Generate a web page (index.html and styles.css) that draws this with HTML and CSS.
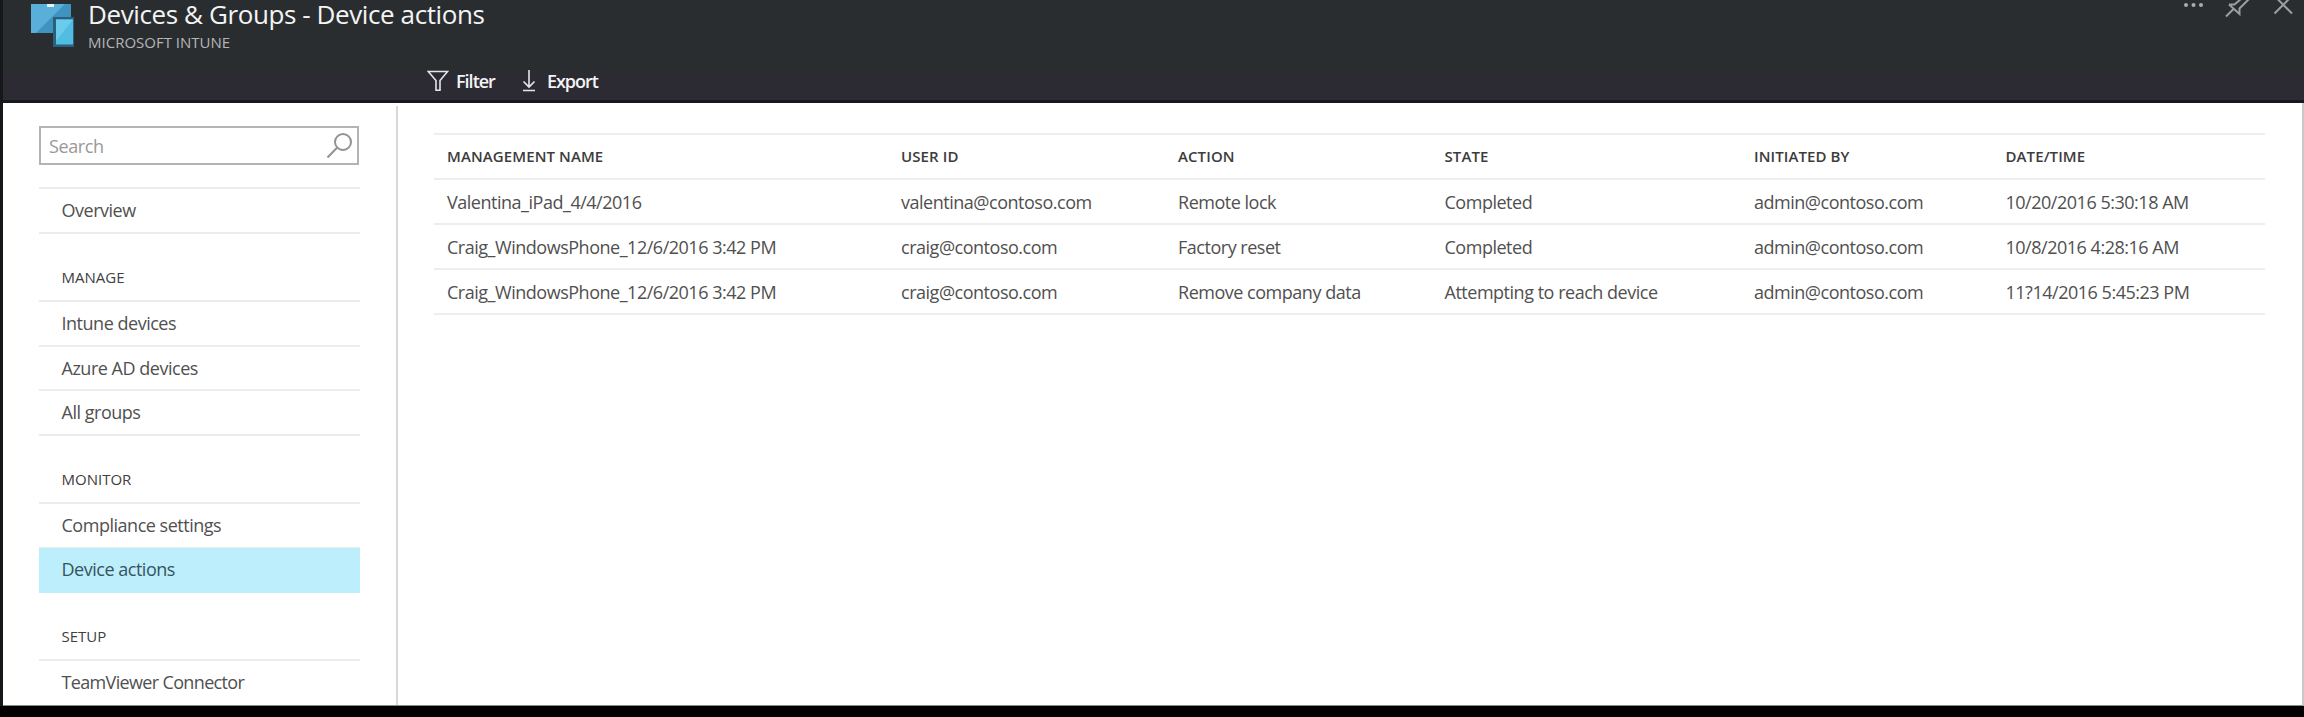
FILE: index.html
```html
<!DOCTYPE html>
<html lang="en">
<head>
<meta charset="utf-8">
<title>Devices &amp; Groups - Device actions</title>
<link rel="stylesheet" href="styles.css">
</head>
<body>
<div class="blade">
  <header class="header">
    <div class="brand">
      <svg class="brand-icon" width="46" height="48" viewBox="0 0 46 48">
        <path d="M1 4h40v29H1z" fill="#3f93c0"/>
        <path d="M1 4h34L6 33H1z" fill="#58b0da"/>
        <path d="M17 4h7v3h-7z" fill="#e4f1f6"/>
        <path d="M23 17h21v30H23z" fill="#2b5f7d"/>
        <path d="M26 19.500h17v25H26z" fill="#52bde3"/>
        <path d="M26 19.500h17L26 41z" fill="#6acbea"/>
      </svg>
      <div class="titles">
        <h1 class="title">Devices &amp; Groups - Device actions</h1>
        <div class="subtitle">MICROSOFT INTUNE</div>
      </div>
      <div class="window-tools">
        <svg width="112" height="20" viewBox="0 0 112 20" fill="none" stroke="#9c9ea0" stroke-width="2">
          <g fill="#a9abad" stroke="none"><circle cx="3" cy="5" r="2"/><circle cx="10.500" cy="5" r="2"/><circle cx="18" cy="5" r="2"/></g>
          <path d="M43 16.500l8-8M46 4.500h5.500L58 -1M46 4.500l10.500 9.500v-5.500L66 -1"/>
          <path d="M91.500 13.500L109-4M91.500-4L109 13.500"/>
        </svg>
      </div>
    </div>
    <div class="commands">
      <button class="command">
        <svg width="22" height="22" viewBox="0 0 22 22" fill="none" stroke="#e6e6e8" stroke-width="1.600"><path d="M1.200 1.500h19.400L13 10.500v9.700H9v-9.700z"/></svg>
        <span class="filter-label">Filter</span>
      </button>
      <button class="command">
        <svg width="16" height="22" viewBox="0 0 16 22" fill="none" stroke="#e6e6e8" stroke-width="1.600"><path d="M8 0v17M2.500 11.500L8 17l5.500-5.500M2 20.500h12"/></svg>
        <span class="export-label">Export</span>
      </button>
    </div>
  </header>
  <div class="content">
    <nav class="menu">
      <div class="search">
        <span class="search-hint">Search</span>
        <svg width="28" height="28" viewBox="0 0 28 28" fill="none" stroke="#929292" stroke-width="2"><circle cx="18" cy="10" r="8"/><path d="M12 15.700L2.500 25.500"/></svg>
      </div>
      <div class="group first"><a class="item">Overview</a></div>
      <h2 class="section">MANAGE</h2>
      <div class="group"><a class="item">Intune devices</a><a class="item">Azure AD devices</a><a class="item">All groups</a></div>
      <h2 class="section">MONITOR</h2>
      <div class="group"><a class="item">Compliance settings</a><a class="item selected">Device actions</a></div>
      <h2 class="section">SETUP</h2>
      <div class="group"><a class="item last">TeamViewer Connector</a></div>
    </nav>
    <main class="main">
      <div class="grid">
        <div class="row head"><span>MANAGEMENT NAME</span><span>USER ID</span><span>ACTION</span><span>STATE</span><span>INITIATED BY</span><span>DATE/TIME</span></div>
        <div class="row"><span>Valentina_iPad_4/4/2016</span><span>valentina@contoso.com</span><span>Remote lock</span><span>Completed</span><span>admin@contoso.com</span><span>10/20/2016 5:30:18 AM</span></div>
        <div class="row"><span>Craig_WindowsPhone_12/6/2016 3:42 PM</span><span>craig@contoso.com</span><span>Factory reset</span><span>Completed</span><span>admin@contoso.com</span><span>10/8/2016 4:28:16 AM</span></div>
        <div class="row"><span>Craig_WindowsPhone_12/6/2016 3:42 PM</span><span>craig@contoso.com</span><span>Remove company data</span><span>Attempting to reach device</span><span>admin@contoso.com</span><span>11?14/2016 5:45:23 PM</span></div>
      </div>
    </main>
  </div>
</div>
</body>
</html>
```
FILE: styles.css
```css
* { box-sizing: border-box; }
body {
  margin: 0;
  height: 717px;
  overflow: hidden;
  background: #000;
  font-family: "Open Sans", "Noto Sans", sans-serif;
  font-size: 18px;
  color: #505050;
}
.blade {
  display: flex;
  flex-direction: column;
  height: 706px;
  border-left: 3px solid #14181b;
}
.header {
  display: flex;
  flex: none;
  flex-direction: column;
  height: 103px;
  background: linear-gradient(#2a2d30 0, #2a2d30 70px, #2c2b34 76px);
  border-bottom: 3px solid #17171f;
  color: #f4f4f4;
}
.brand { display: flex; height: 62px; }
.brand-icon { margin-left: 27px; flex: none; }
.titles { margin-left: 12px; flex: 1; }
.title {
  margin: -5px 0 0;
  font-size: 26px;
  line-height: 38px;
  font-weight: 400;
  letter-spacing: -0.4px;
  white-space: nowrap;
}
.subtitle {
  margin-top: -1px;
  font-size: 15px;
  line-height: 20px;
  letter-spacing: 0;
  color: #b4b5b7;
}
.window-tools { width: 121px; flex: none; }
.window-tools svg, .command svg, .search svg { display: block; }
.commands { display: flex; gap: 26px; padding: 8px 0 0 424px; }
.command {
  display: flex;
  align-items: center;
  gap: 7px;
  height: 22px;
  padding: 0;
  border: 0;
  background: none;
  color: #f4f4f4;
  font: 600 18px/22px "Open Sans", sans-serif;
  letter-spacing: -1px;
}
.export-label { margin-left: 3px; }
.content {
  display: flex;
  flex: 1;
  min-height: 0;
  overflow: hidden;
  background: #fff;
  border-right: 2px solid #c9c9c9;
  border-bottom: 1px solid #8a8a8a;
}
.menu {
  width: 395px;
  flex: none;
  margin-top: 3px;
  padding: 20px 37px 0 36px;
  border-right: 2px solid #d8d8d8;
}
.search {
  display: flex;
  justify-content: space-between;
  width: 320px;
  height: 39px;
  padding: 4px 4px 0 8px;
  border: 2px solid #b4b4b4;
  color: #999;
}
.search-hint { line-height: 28px; letter-spacing: -0.4px; }
.group { width: 321px; border-top: 2px solid #ececec; }
.group.first { margin-top: 22px; }
.item {
  display: block;
  height: 44.800px;
  padding-left: 22.500px;
  border-bottom: 2px solid #ececec;
  line-height: 43.500px;
  letter-spacing: -0.480px;
}
.item.selected {
  margin-top: -1px;
  height: 45px;
  border-bottom: 0;
  background: #bdeefb;
  color: #35545f;
}
.item.last { border-bottom: 0; letter-spacing: -0.650px; }
.section {
  height: 66px;
  margin: 0;
  padding: 21px 0 0 22.500px;
  font-size: 15px;
  line-height: 44px;
  font-weight: 400;
  letter-spacing: 0;
  color: #404040;
}
.main { flex: 1; padding: 30px 37px 0 36px; }
.grid { border-top: 2px solid #eee; }
.row {
  display: grid;
  grid-template-columns: 454px 277px 266.500px 309.500px 251.500px 1fr;
  height: 44.900px;
  padding-left: 13px;
  border-bottom: 2px solid #eee;
  line-height: 44px;
  letter-spacing: -0.480px;
  white-space: nowrap;
}
.head { font-size: 15px; line-height: 42px; font-weight: 600; letter-spacing: 0.100px; color: #3c3c3c; }
```
